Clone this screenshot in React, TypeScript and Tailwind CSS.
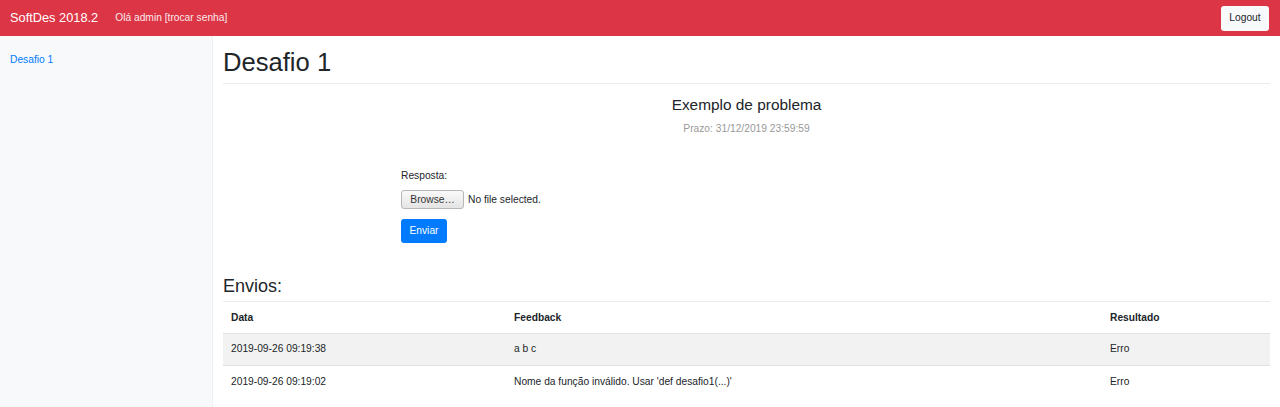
import React from 'react';

type Envio = {
  data: string;
  feedback: string;
  resultado: string;
};

const envios: Envio[] = [
  { data: '2019-09-26 09:19:38', feedback: 'a b c', resultado: 'Erro' },
  {
    data: '2019-09-26 09:19:02',
    feedback: "Nome da função inválido. Usar 'def desafio1(...)'",
    resultado: 'Erro',
  },
];

const Navbar: React.FC = () => (
  <nav className="flex h-[36px] items-center bg-[#dc3545] pl-[10px] pr-[11px]">
    <a href="#" className="text-[12.8px] leading-none text-white">
      SoftDes 2018.2
    </a>
    <span className="ml-[17px] text-[10.24px] leading-none text-[#fbe9eb]">
      Olá admin <a href="#">[trocar senha]</a>
    </span>
    <button className="ml-auto h-[25px] w-[48px] rounded-[3px] bg-[#f8f9fa] text-[10.24px] text-[#212529]">
      Logout
    </button>
  </nav>
);

const Sidebar: React.FC = () => (
  <aside className="w-[213px] shrink-0 border-r border-[#eef0f2] bg-[#f8f9fa] pl-[10px] pt-[16px]">
    <a href="#" className="block text-[10.24px] leading-[15px] text-[#007bff]">
      Desafio 1
    </a>
  </aside>
);

const App: React.FC = () => {
  return (
    <div className="min-h-[407px] bg-white font-['Liberation_Sans',Arial,sans-serif] text-[#212529]">
      <Navbar />
      <div className="flex min-h-[371px]">
        <Sidebar />
        <main className="flex-1 px-[10px] pt-[11px]">
          <h1 className="border-b border-[#e9ecef] pb-[5px] text-[25.6px] leading-[31px]">Desafio 1</h1>

          <div className="text-center">
            <h4 className="mt-[12px] text-[15.4px] leading-[18px]">Exemplo de problema</h4>
            <p className="mt-[7px] text-[10.24px] leading-[15px] text-[#999]">Prazo: 31/12/2019 23:59:59</p>
          </div>

          <form className="ml-[178px] mt-[32px]">
            <label className="block text-[10.24px] leading-[15px]">Resposta:</label>
            <div className="mt-[7px] flex items-center">
              <span className="flex h-[19px] w-[63px] items-center justify-center rounded-[3px] border border-[#b7b7b7] bg-gradient-to-b from-[#fafafa] to-[#e4e4e4] text-[10.24px] text-[#333]">
                Browse…
              </span>
              <span className="ml-[4px] text-[10.24px]">No file selected.</span>
            </div>
            <button
              type="button"
              className="mt-[10px] h-[24px] w-[46px] rounded-[3px] bg-[#007bff] text-[10.24px] text-white"
            >
              Enviar
            </button>
          </form>

          <h3 className="mt-[32px] border-b border-[#e9ecef] pb-[4px] text-[18px] leading-[22px]">Envios:</h3>

          <table className="w-full table-fixed border-collapse text-left text-[10.24px]">
            <colgroup>
              <col className="w-[283px]" />
              <col className="w-[596px]" />
              <col className="w-[168px]" />
            </colgroup>
            <thead>
              <tr className="h-[31px] border-b border-[#dee2e6]">
                <th className="px-[8px] font-bold">Data</th>
                <th className="px-[8px] font-bold">Feedback</th>
                <th className="px-[8px] font-bold">Resultado</th>
              </tr>
            </thead>
            <tbody>
              {envios.map((envio, i) => (
                <tr
                  key={i}
                  className={`h-[32px] ${i < envios.length - 1 ? 'border-b border-[#dee2e6]' : ''} ${i % 2 === 0 ? 'bg-[#f2f2f2]' : ''}`}
                >
                  <td className="px-[8px]">{envio.data}</td>
                  <td className="px-[8px]">{envio.feedback}</td>
                  <td className="px-[8px]">{envio.resultado}</td>
                </tr>
              ))}
            </tbody>
          </table>
        </main>
      </div>
    </div>
  );
};

export default App;
